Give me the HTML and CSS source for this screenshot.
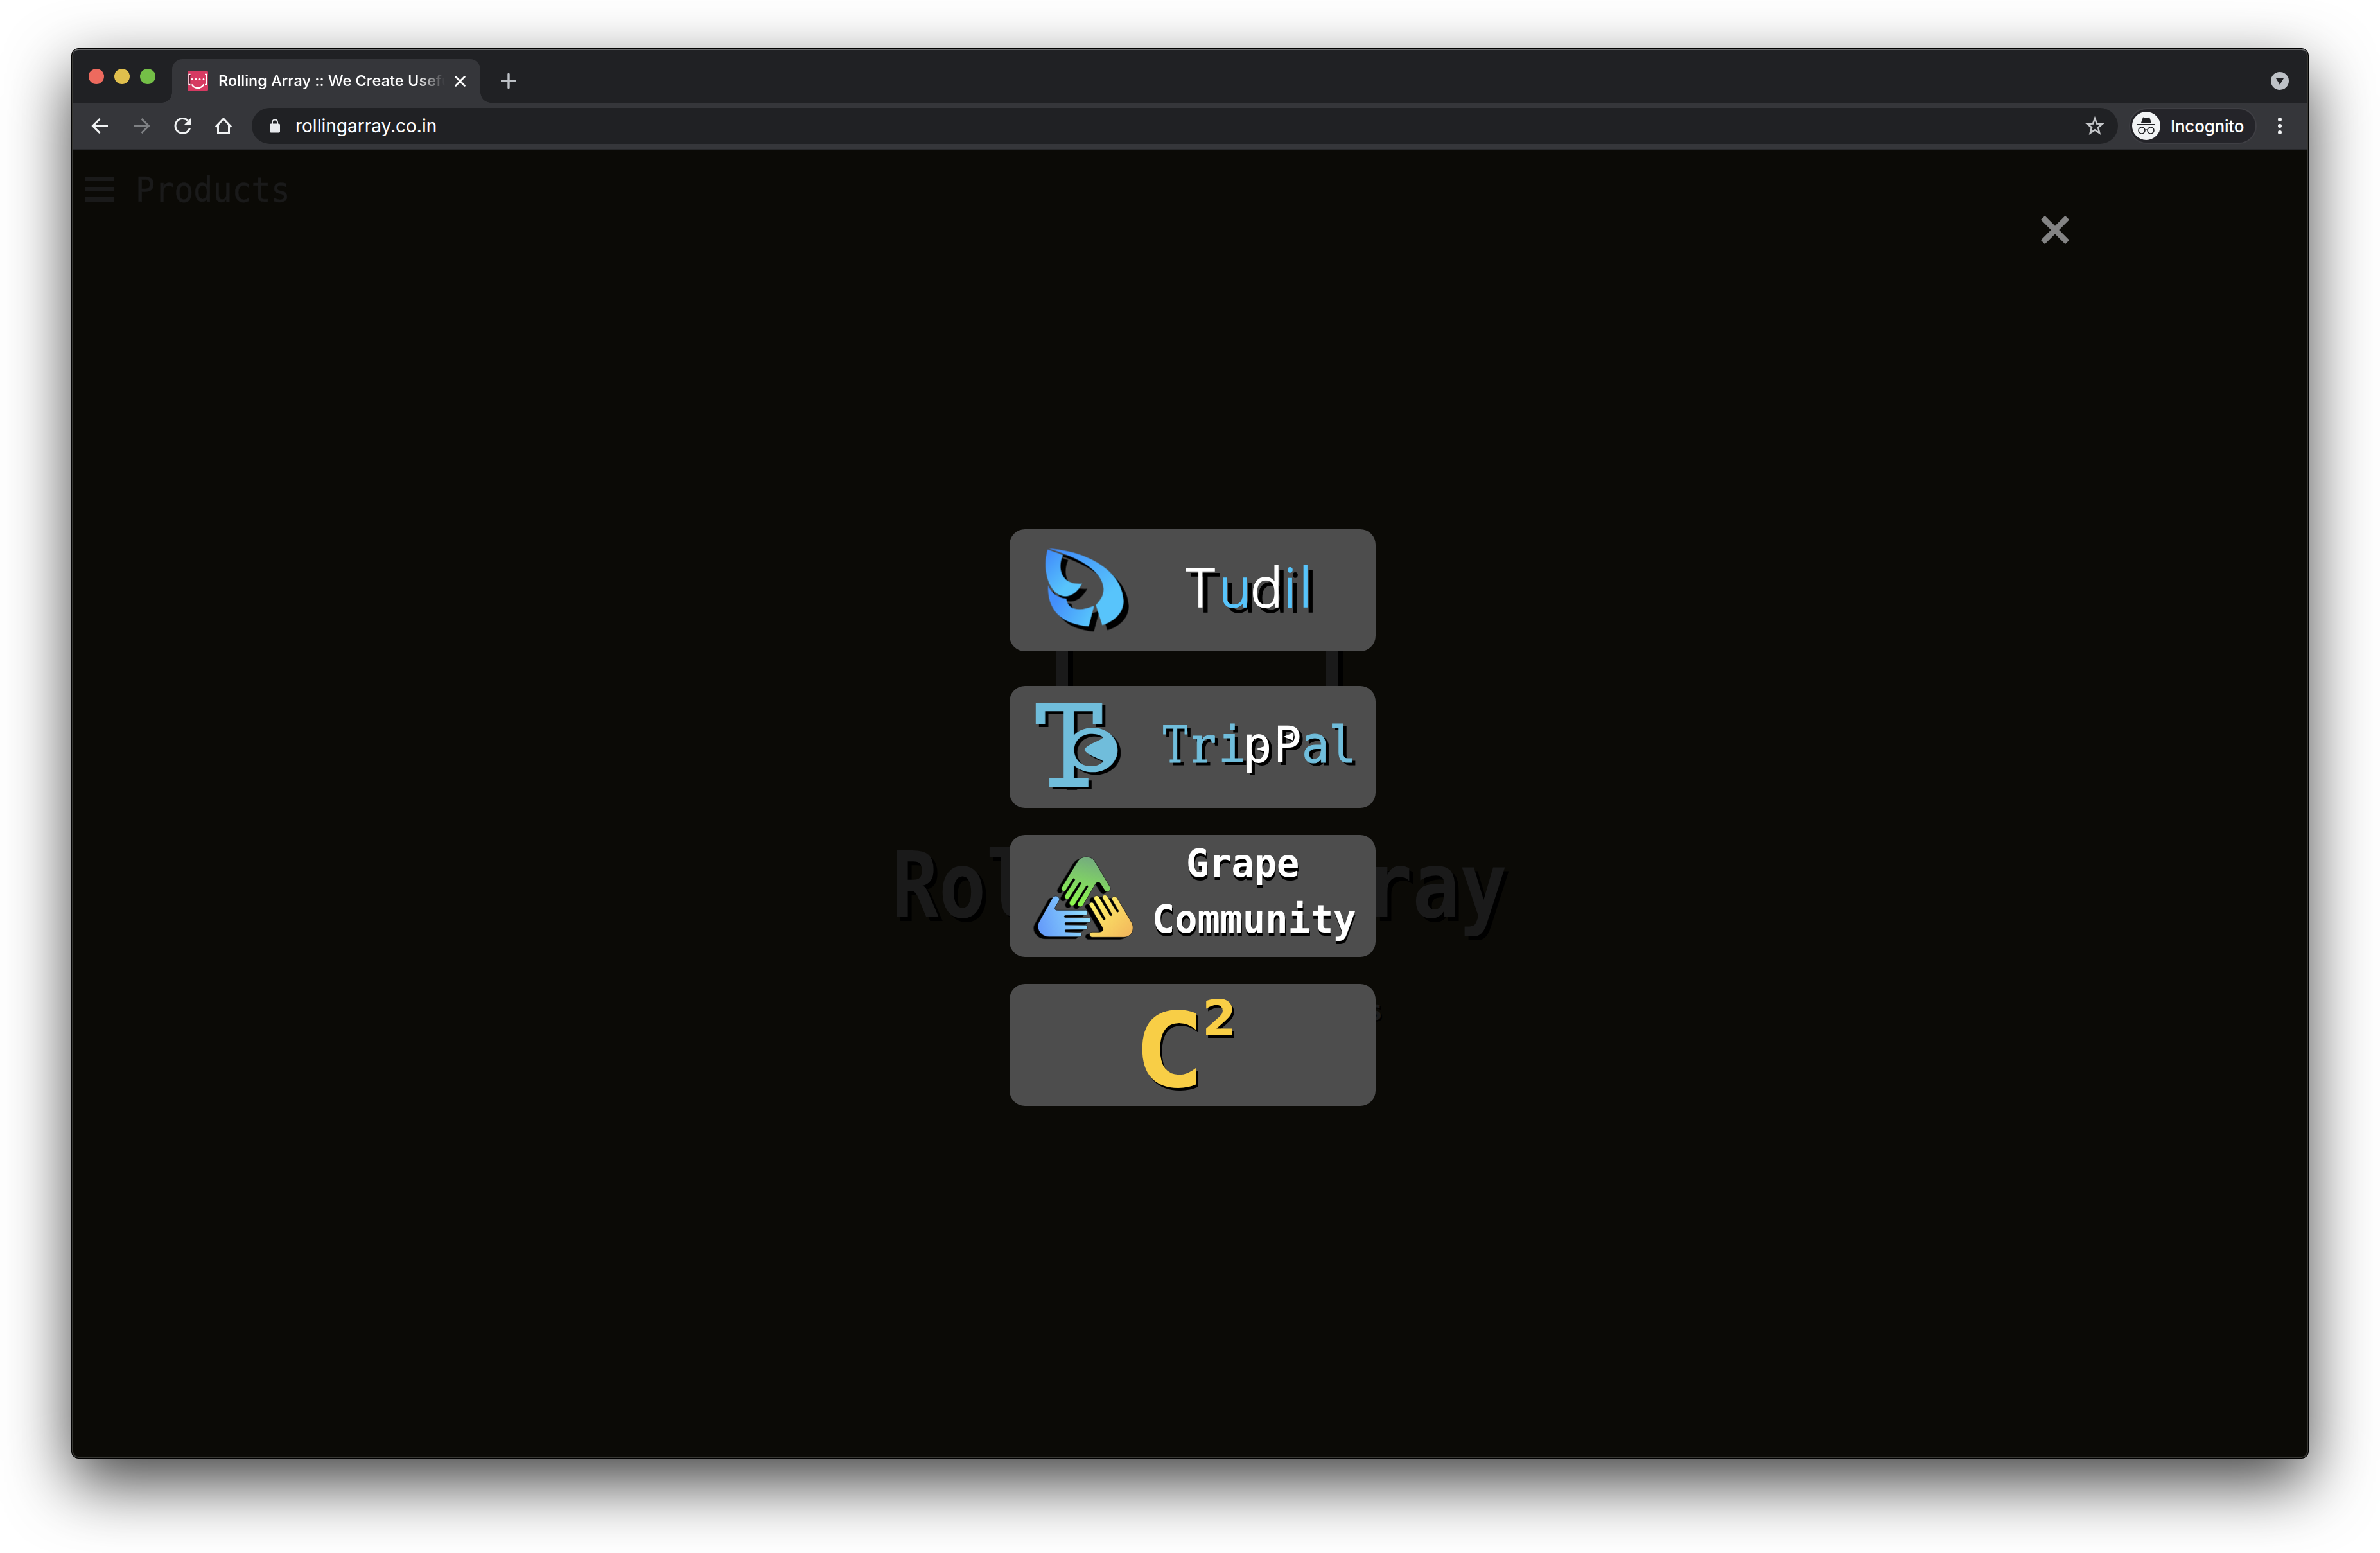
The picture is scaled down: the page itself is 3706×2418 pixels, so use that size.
FILE: index.html
```html
<!DOCTYPE html>
<html lang="en">
<head>
<meta charset="utf-8">
<title>Rolling Array :: We Create Useful Products</title>
<link rel="stylesheet" href="styles.css">
</head>
<body>
<div class="window">
  <div class="tabstrip">
    <div class="lights"><i class="red"></i><i class="yellow"></i><i class="green"></i></div>
    <div class="tab">
      <svg class="favicon" viewBox="0 0 32 32"><rect width="32" height="32" rx="3" fill="#d63a62"/><g fill="none" stroke="#5d2435" stroke-width="1.600" transform="translate(1 1)"><path d="M4.500 6H2.500V21H4.500M27.500 6H29.500V21H27.500"/></g><g fill="none" stroke="#fff" stroke-width="1.300"><path d="M4.500 5.500H2V21.500H4.500M27 5.500H29.500V21.500H27"/><path d="M6.500 21.500C11 29 20 29 25.500 21.500" stroke-width="2.200"/></g><g fill="#fff"><circle cx="7" cy="13.500" r="1.400"/><circle cx="13" cy="13.500" r="1.400"/><circle cx="19" cy="13.500" r="1.400"/><circle cx="25" cy="13.500" r="1.400"/></g></svg>
      <span class="tab-title">Rolling Array :: We Create Useful</span>
      <svg class="tab-close" viewBox="0 0 16 16"><path d="M1.500 1.500L14.500 14.500M14.500 1.500L1.500 14.500" stroke="#fff" stroke-width="2.600" stroke-linecap="round"/></svg>
    </div>
    <svg class="plus" viewBox="0 0 24 24"><path d="M12 1.500V22.500M1.500 12H22.500" stroke="#bdc1c6" stroke-width="3.400" stroke-linecap="round"/></svg>
    <svg class="tab-search" viewBox="0 0 28 28"><circle cx="14" cy="14" r="14" fill="#bdc1c6"/><path d="M8 10H20L14 20Z" fill="#202124"/></svg>
  </div>
  <div class="toolbar">
    <svg class="nav" viewBox="0 0 32 32"><path d="M28 16H5M15.500 5L4.500 16L15.500 27" fill="none" stroke="#f1f3f4" stroke-width="3"/></svg>
    <svg class="nav" viewBox="0 0 32 32"><path d="M4 16H27M16.500 5L27.500 16L16.500 27" fill="none" stroke="#7f8184" stroke-width="3"/></svg>
    <svg class="nav" viewBox="0 0 32 32"><path d="M27.500 19.500A11.500 11.500 0 1 1 24.800 8" fill="none" stroke="#f1f3f4" stroke-width="3"/><path d="M30 3V14H19Z" fill="#f1f3f4"/></svg>
    <svg class="nav" viewBox="0 0 32 32"><path d="M4 17.500L16 5L28 17.500M7.500 15V27.500H24.500V15" fill="none" stroke="#f1f3f4" stroke-width="3"/></svg>
    <div class="omnibox">
      <svg class="lock" viewBox="0 0 16 22"><path d="M4 8V5.500C4 0.200 12 0.200 12 5.500V8" fill="none" stroke="#e8eaed" stroke-width="2"/><rect y="7.500" width="16" height="14" rx="2" fill="#e8eaed"/></svg>
      <span class="url">rollingarray.co.in</span>
      <svg class="star" viewBox="0 0 30 30"><path d="M15 3.500L18 11.500L26.500 12L20 17.500L22.200 26L15 21.300L7.800 26L10 17.500L3.500 12L12 11.500Z" fill="none" stroke="#c4c6c9" stroke-width="2.600"/></svg>
    </div>
    <div class="incognito">
      <svg class="spy" viewBox="0 0 44 44"><circle cx="22" cy="22" r="22" fill="#f1f3f4"/><path d="M14 17L17 8.500Q22 10.500 27 8.500L30 17Z" fill="#202124"/><path d="M8 20H36" stroke="#202124" stroke-width="1.800"/><g fill="none" stroke="#202124" stroke-width="1.600"><circle cx="15" cy="29" r="5"/><circle cx="29" cy="29" r="5"/><path d="M20 28.500Q22 27.500 24 28.500"/></g></svg>
      <span>Incognito</span>
    </div>
    <svg class="dots" viewBox="0 0 6 26"><g fill="#f1f3f4"><circle cx="3" cy="3" r="3"/><circle cx="3" cy="13" r="3"/><circle cx="3" cy="23" r="3"/></g></svg>
  </div>
  <main class="page">
    <header class="page-head">
      <div class="burger"><i></i><i></i><i></i></div>
      <span>Products</span>
    </header>
    <section class="hero">
      <div class="bracket"><i></i><i></i></div>
      <h1>Rolling Array</h1>
      <p>s</p>
    </section>
    <div class="overlay">
      <svg class="dismiss" viewBox="0 0 44 44"><path d="M3 3L41 41M41 3L3 41" stroke="#848484" stroke-width="9"/></svg>
      <div class="cards">
        <svg class="card tudil" viewBox="0 0 570 190">
          <defs>
            <linearGradient id="b1" x1="0" y1="0" x2=".8" y2="1"><stop offset="0" stop-color="#3f88fb"/><stop offset=".75" stop-color="#58c4fb"/></linearGradient>
            <linearGradient id="b2" x1="0" y1="0.200" x2="1" y2=".7"><stop offset=".2" stop-color="#438ffb"/><stop offset="1" stop-color="#58c4fb"/></linearGradient>
          </defs>
          <g class="drop8">
            <g transform="translate(28 16) scale(.3333)">
              <path fill="url(#b1)" d="M100 43C250 50 440 130 449 285C449 340 410 380 349 400L319 306C345 278 355 260 355 230C350 145 240 85 100 43Z"/>
              <path fill="url(#b1)" d="M94 47L166 72C138 130 155 215 255 206C235 245 205 266 175 266C100 262 65 140 94 47Z"/>
              <path fill="url(#b2)" d="M96 213C108 245 140 274 181 276C190 335 250 335 311 309L286 406C160 395 90 330 96 213Z"/>
            </g>
            <text class="tudil-word" y="121"><tspan x="275" class="w">T</tspan><tspan x="326" class="b">u</tspan><tspan x="375" class="w">d</tspan><tspan x="427" class="b">i</tspan><tspan x="451" class="b">l</tspan></text>
          </g>
        </svg>
        <svg class="card trippal" viewBox="0 0 570 190">
          <g class="drop-trip" fill="#70bddb">
            <path transform="matrix(.3827 0 0 .3333 -12 -58)" fill-rule="evenodd" d="M138 252H408V354H370V292H294V403C312 381 340 369 370 369C426 369 471 415 471 473C471 531 426 577 370 577C340 577 312 565 294 545V604H352V645H293V647H251V645H193V604H251V292H176V354H138ZM412 413C398 402 382 398 360 398C320 400 294 435 294 473C294 511 320 549 360 549C385 549 400 541 413 527C405 515 340 496 337 472C340 448 410 427 412 413Z"/>
            <text class="serif-letter blue-edge" transform="translate(239 119) scale(.72 1)">T</text>
            <text class="serif-letter blue-edge" transform="translate(283 119) scale(.96 1)">r</text>
            <g class="mono-letter">
              <text class="blue-edge" transform="translate(325 119) scale(.9 1)">i</text>
              <text fill="#fff" transform="translate(363 119) scale(.96 1)">p</text>
              <text fill="#fff" transform="translate(411 119) scale(.92 1)">P</text>
              <text class="blue-edge" transform="translate(455 119) scale(.9 1)">a</text>
              <text class="blue-edge" transform="translate(497 119) scale(.9 1)">l</text>
            </g>
            <path fill="#fff" d="M384 98L403 92V104ZM426.500 79L442 73V85Z"/>
          </g>
        </svg>
        <svg class="card" viewBox="0 0 570 190">
          <defs>
            <linearGradient id="hg" gradientUnits="userSpaceOnUse" x1="310" y1="75" x2="250" y2="300"><stop offset="0" stop-color="#74ac7e"/><stop offset="1" stop-color="#8cf84b"/></linearGradient>
            <linearGradient id="hb" gradientUnits="userSpaceOnUse" x1="80" y1="420" x2="320" y2="350"><stop offset="0" stop-color="#6399fa"/><stop offset="1" stop-color="#92e0fc"/></linearGradient>
            <linearGradient id="hy" gradientUnits="userSpaceOnUse" x1="340" y1="270" x2="510" y2="430"><stop offset="0" stop-color="#fdf169"/><stop offset="1" stop-color="#f3b95c"/></linearGradient>
          </defs>
          <g class="drop-hands" transform="translate(18 10) scale(.3333)" stroke="#111" stroke-width="2">
            <path fill="url(#hg)" d="M265 92C283 66 327 66 343 92L415 212C424 230 402 244 391 229L370 196C362 187 353 190 348 198L289 298C279 314 258 302 266 287L312 213C313 206 308 204 304 209L251 294C240 308 220 298 227 282L281 196C279 189 274 190 270 195L225 264C215 276 199 266 205 252L251 180C251 173 245 171 241 177L208 229C200 238 184 230 190 215Z"/>
            <path fill="url(#hb)" d="M147 264C155 248 182 256 179 274L159 308C155 316 160 322 170 322L302 322C313 325 313 343 302 344L206 346C200 348 200 355 206 356L318 358C329 361 329 376 318 379L208 379C203 381 203 389 208 390L302 391C312 394 312 409 302 412L208 413C203 415 203 421 208 423L274 425C285 428 285 444 274 446L130 446C95 446 68 410 82 380Z"/>
            <path fill="url(#hy)" d="M318 296C320 282 336 282 340 292L384 366C388 370 394 366 393 360L341 270C338 254 354 248 364 260L415 344C420 350 426 346 424 340L381 266C376 250 394 246 402 256L446 328C451 333 457 330 455 324L424 270C424 256 440 252 448 264L517 380C532 412 516 446 482 448L330 448C317 444 317 428 330 424L365 424C384 422 386 412 380 402Z"/>
          </g>
          <g class="grape-word"><text transform="translate(275 65) scale(1 1.040)">Grape</text><text transform="translate(222 152) scale(1 1.040)">Community</text></g>
        </svg>
        <svg class="card" viewBox="0 0 570 190">
          <g class="c-mark"><text class="big" transform="translate(193 160) scale(1.150 1)">C</text><text class="sup" x="300" y="80">2</text></g>
        </svg>
      </div>
    </div>
  </main>
</div>
</body>
</html>
```
FILE: styles.css
```css
* { box-sizing: border-box; }
body { margin: 0; width: 3706px; height: 2418px; overflow: hidden; background: #fff; padding: 75px 111px 147px; font-family: Inter, sans-serif; }
svg { display: block; flex: none; }
.window { position: relative; width: 3484px; height: 2196px; border: 1px solid #000; border-radius: 11px; background: #0b0a06; padding: 1px; box-shadow: 0 38px 100px rgba(0,0,0,.74); display: flex; flex-direction: column; overflow: hidden; }
/* thin light rim drawn over the window content */
.window::after { content: ""; position: absolute; inset: 0; border: 2px solid rgba(255,255,255,.19); border-top-color: rgba(255,255,255,.33); border-radius: 10px; pointer-events: none; }

.tabstrip { height: 83px; flex: none; background: #202124; display: flex; align-items: flex-start; padding-left: 25px; padding-right: 29px; }
.lights { display: flex; gap: 16px; margin-top: 30px; width: 130px; flex: none; }
.lights i { width: 24px; height: 24px; border-radius: 50%; }
.red { background: #ed6a5e; }
.yellow { background: #e0bf4d; }
.green { background: #74bf47; }
.tab { position: relative; width: 480px; height: 68px; margin-top: 15px; background: #35363a; border-radius: 16px 16px 0 0; display: flex; align-items: center; padding-left: 24px; }
.tab::before, .tab::after { content: ""; position: absolute; bottom: 0; width: 16px; height: 16px; }
.tab::before { left: -16px; background: radial-gradient(circle at 0 0, transparent 15.500px, #35363a 16px); }
.tab::after { right: -16px; background: radial-gradient(circle at 100% 0, transparent 15.500px, #35363a 16px); }
.favicon { width: 32px; height: 32px; }
.tab-title { width: 353px; margin-left: 16px; overflow: hidden; white-space: nowrap; font-size: 23.500px; line-height: 32px; font-weight: 500; letter-spacing: .05px; color: #fff; -webkit-mask-image: linear-gradient(90deg, #000 310px, transparent 353px); mask-image: linear-gradient(90deg, #000 310px, transparent 353px); }
.tab-close { width: 17px; height: 17px; margin-left: 15px; }
.plus { width: 24px; height: 24px; margin: 37px 0 0 32px; }
.tab-search { width: 28px; height: 28px; margin: 35px 0 0 auto; }

.toolbar { height: 74px; flex: none; background: #35363a; border-bottom: 2px solid #292a2d; display: flex; align-items: center; padding-left: 27px; }
.nav { width: 32px; height: 32px; margin-right: 32px; }
.omnibox { width: 2906px; height: 56px; margin-left: -4px; border-radius: 28px; background: #202124; display: flex; align-items: center; padding: 0 21px 0 28px; }
.lock { width: 16px; height: 22px; }
.url { margin-left: 24px; font-size: 28px; line-height: 36px; color: #fff; letter-spacing: 0; }
.star { width: 30px; height: 30px; margin-left: auto; }
.incognito { width: 199px; height: 56px; margin-left: 17px; border: 2px solid #3f3f44; border-radius: 28px; background: #242429; display: flex; align-items: center; gap: 16px; padding-left: 3px; color: #fff; font-size: 26px; font-weight: 500; letter-spacing: -.2px; }
.spy { width: 44px; height: 44px; }
.dots { width: 6px; height: 26px; margin-left: 33px; }

.page { position: relative; flex: 1; background: #0b0a06; color: #1a1a1a; }
.page-head { display: flex; padding: 34px 0 0 19px; height: 100px; }
.burger { display: flex; flex-direction: column; gap: 9px; width: 46px; padding-top: 7px; }
.burger i { height: 7px; background: #1a1a1a; }
.page-head span { font: 50px/60px "DejaVu Sans Mono", monospace; margin-left: 33px; margin-top: -5px; transform: scaleY(1.080); transform-origin: 0 0; -webkit-text-stroke: .6px #1a1a1a; }
.hero { display: flex; flex-direction: column; padding-left: 1275px; }
.bracket { display: flex; justify-content: space-between; width: 440px; height: 250px; margin: 580px 0 0 256px; }
.bracket i { width: 19px; background: #1a1a1a; box-shadow: 8px 0 0 #000; }
h1 { margin: 132px 0 0; font: bold 122.500px/144px "DejaVu Sans Mono", monospace; white-space: nowrap; transform: scaleY(1.160); transform-origin: 0 0; text-shadow: 6px 5px 0 #000; }
p { margin: 108px 0 0 739px; width: 32px; font: bold 44px/50px "DejaVu Sans Mono", monospace; text-shadow: 2px 2px 0 #000; }

.overlay { position: absolute; inset: 0; }
.dismiss { width: 44px; height: 44px; margin: 102px 0 0 3065px; }
.cards { display: flex; flex-direction: column; gap: 42px; width: 570px; margin: 444px 0 0 1459px; }
.card { width: 570px; height: 190px; border-radius: 24px; background: #4d4d4d; }
.tudil { margin-bottom: 12px; }
.drop8 { filter: drop-shadow(8px 8px 0 #000); }
.drop-trip { filter: drop-shadow(5.500px 4px 0 #000); }
.drop-hands { filter: drop-shadow(-19px 9px 0 #000); }
.tudil-word { font: 300 84px "Noto Sans", sans-serif; stroke-width: 1.400px; }
.w { fill: #fff; stroke: #fff; }
.b { fill: #58c4fb; stroke: #58c4fb; }
.serif-letter { font: 79px "DejaVu Serif", serif; }
.mono-letter { font: 79px "DejaVu Sans Mono", monospace; }
.blue-edge { stroke: #70bddb; stroke-width: 1px; }
.grape-word { font: bold 58.600px "DejaVu Sans Mono", monospace; fill: #fff; filter: drop-shadow(1px 5px 0 #000); }
.c-mark { fill: #f8ce46; filter: drop-shadow(3px 4px 0 #000); }
.big { font: bold 161px "DejaVu Sans Mono", monospace; }
.sup { font: bold 77px "DejaVu Sans", sans-serif; }
```
